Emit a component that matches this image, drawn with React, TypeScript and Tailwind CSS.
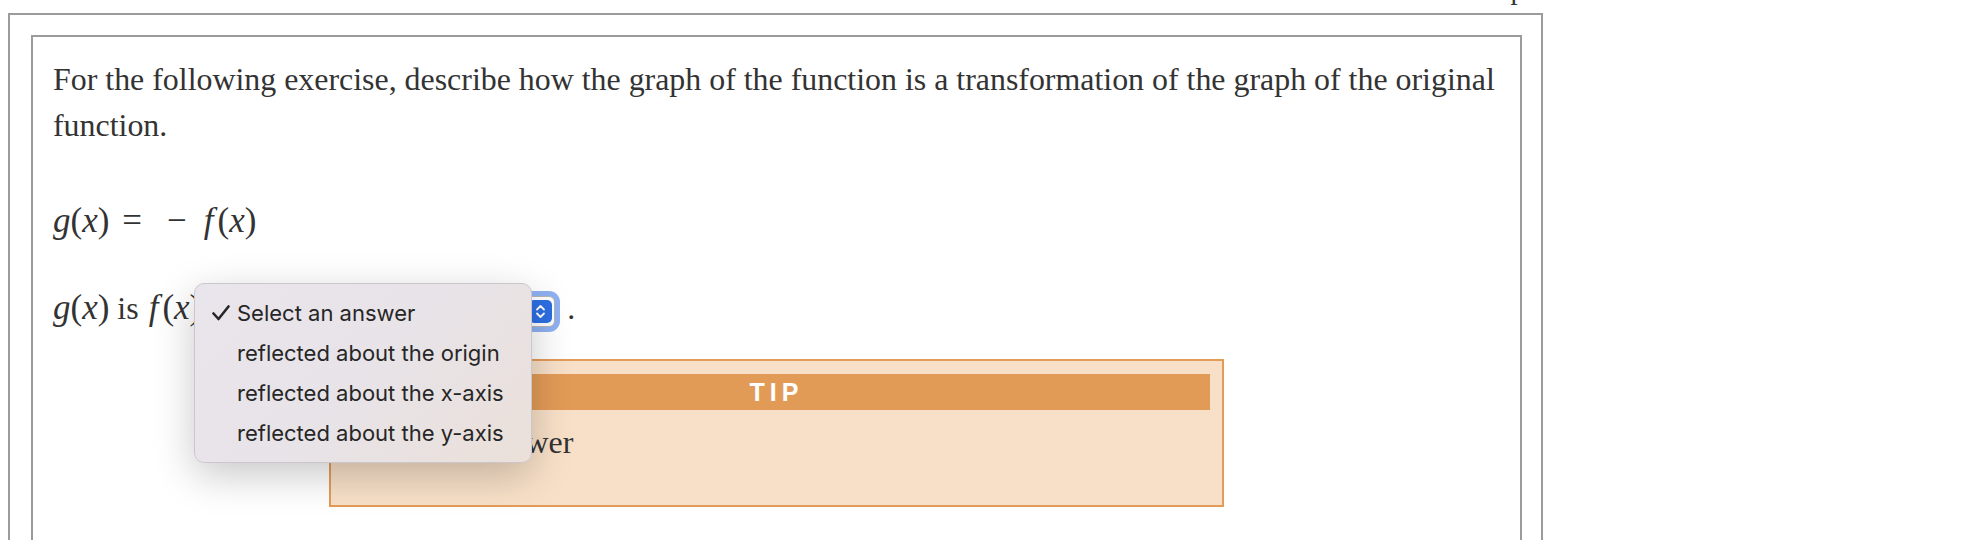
import React from "react";

function Check() {
  return (
    <svg width="18" height="16" viewBox="0 0 18 16" fill="none">
      <path d="M1.5 8.5 L6.5 14 L16.5 1.5" stroke="#262626" strokeWidth="2.6" strokeLinecap="round" strokeLinejoin="round" />
    </svg>
  );
}

function Chevrons() {
  return (
    <svg width="23" height="23" viewBox="0 0 23 23" fill="none">
      <path d="M8 9.5 L11.5 6 L15 9.5" stroke="white" strokeWidth="1.8" strokeLinecap="round" strokeLinejoin="round" />
      <path d="M8 13.5 L11.5 17 L15 13.5" stroke="white" strokeWidth="1.8" strokeLinecap="round" strokeLinejoin="round" />
    </svg>
  );
}

function Gx() {
  return (
    <span className="text-[35px]">
      <span className="italic">g</span>
      <span>(</span>
      <span className="italic">x</span>
      <span>)</span>
    </span>
  );
}

function Fx() {
  return (
    <span className="text-[35px]">
      <span className="italic mr-[4px]">f</span>
      <span>(</span>
      <span className="italic">x</span>
      <span>)</span>
    </span>
  );
}

export default function App() {
  const items = [
    { label: "Select an answer", checked: true },
    { label: "reflected about the origin", checked: false },
    { label: "reflected about the x-axis", checked: false },
    { label: "reflected about the y-axis", checked: false },
  ];
  return (
    <div className="relative w-[1984px] h-[540px] overflow-hidden bg-white text-[#333333] font-['Liberation_Serif',serif]">
      <div className="h-[13px] overflow-hidden">
        <div className="-mt-[25px] text-right pr-[459px] text-[28.8px] leading-none">p</div>
      </div>
      <div className="ml-[8px] w-[1535px] h-[620px] border-2 border-[#9b9b9b] pt-[20px] pl-[21px]">
        <div className="w-[1491px] h-[600px] border-2 border-[#9b9b9b] pt-[20px] px-[20px] text-[31.9px] leading-[46px]">
          <p>
            For the following exercise, describe how the graph of the function is a transformation of the graph of the original function.
          </p>
          <div className="mt-[49px] h-[46px] leading-[46px] flex items-baseline">
            <Gx />
            <span className="text-[35px] ml-[13px]">=</span>
            <span className="text-[35px] ml-[25px]">−</span>
            <span className="ml-[17px]">
              <Fx />
            </span>
          </div>
          <div className="mt-[41px] h-[46px] flex items-baseline leading-[46px]">
            <Gx />
            <span className="ml-[8px]">is</span>
            <span className="ml-[10px]">
              <Fx />
            </span>
            <div className="ml-[14px] w-[340px] h-[31px] flex items-center justify-between rounded-[6px] border border-[#b5b5b5] bg-white pl-[12px] pr-[2px] ring-[5px] ring-[#8fb1f2] font-['Inter',sans-serif] text-[22px] leading-normal text-[#262626]">
              <span>Select an answer</span>
              <span className="flex h-[23px] w-[23px] items-center justify-center rounded-[5px] bg-[#2d6fe3]">
                <Chevrons />
              </span>
            </div>
            <span className="ml-[12px]">.</span>
          </div>
          <div className="mt-[28px] mx-auto w-[895px] h-[148px] border-2 border-[#e39c58] bg-[#f8e0c8] px-[12px] pt-[13px]">
            <div className="h-[36px] bg-[#e29b57] flex items-center justify-center font-['Liberation_Sans',sans-serif] font-bold text-white text-[25px] tracking-[5px] leading-none">
              TIP
            </div>
            <div className="mt-[10px] pl-[16px] leading-[46px]">Select an answer</div>
          </div>
        </div>
      </div>

      <div className="absolute left-[194px] top-[283px] w-[338px] h-[180px] rounded-[10px] border border-[#cbc6cc] bg-[linear-gradient(135deg,#e9e5ec_0%,#e8e3e7_55%,#ebe0d9_100%)] shadow-[0_12px_40px_rgba(0,0,0,0.22)] pt-[9px] font-['Inter',sans-serif] text-[22px] text-[#262626]">
        {items.map((it) => (
          <div key={it.label} className="flex h-[40px] items-center pl-[17px] leading-[40px]">
            <span className="flex w-[25px] items-center">{it.checked ? <Check /> : null}</span>
            <span>{it.label}</span>
          </div>
        ))}
      </div>
    </div>
  );
}
